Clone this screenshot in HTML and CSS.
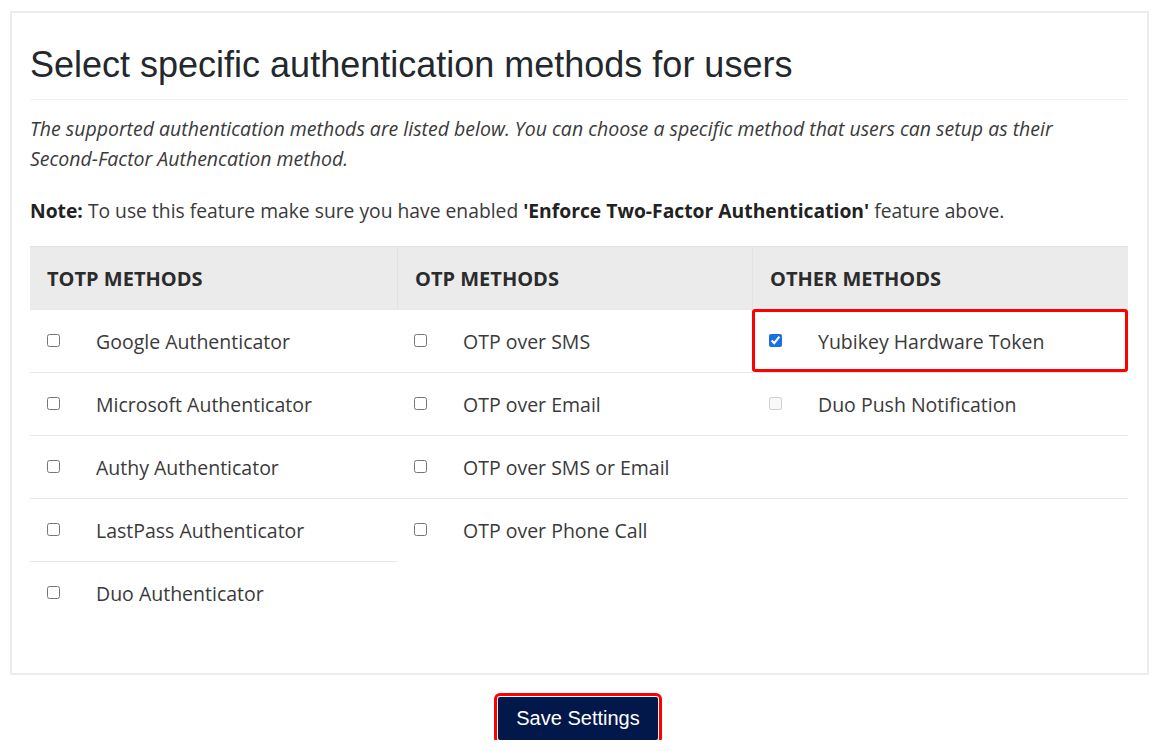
FILE: index.html
```html
<!DOCTYPE html>
<html lang="en">
<head>
    <meta charset="UTF-8">
    <title>Authentication methods</title>
    <link rel="stylesheet" href="styles.css">
</head>
<body>
<div class="page">
    <div class="card">
        <h2 class="card-title">Select specific authentication methods for users</h2>
        <p class="intro">The supported authentication methods are listed below. You can choose a specific method that users can setup as their Second-Factor Authencation method.</p>
        <p class="note"><b>Note:</b> To use this feature make sure you have enabled <b>'Enforce Two-Factor Authentication'</b> feature above.</p>

        <div class="methods">
            <div class="head">TOTP METHODS</div>
            <div class="head">OTP METHODS</div>
            <div class="head">OTHER METHODS</div>

            <label class="cell"><input type="checkbox"><span>Google Authenticator</span></label>
            <label class="cell"><input type="checkbox"><span>OTP over SMS</span></label>
            <label class="cell marked"><input type="checkbox" checked><span>Yubikey Hardware Token</span></label>

            <label class="cell"><input type="checkbox"><span>Microsoft Authenticator</span></label>
            <label class="cell"><input type="checkbox"><span>OTP over Email</span></label>
            <label class="cell"><input type="checkbox" disabled><span>Duo Push Notification</span></label>

            <label class="cell"><input type="checkbox"><span>Authy Authenticator</span></label>
            <label class="cell"><input type="checkbox"><span>OTP over SMS or Email</span></label>
            <div class="cell"></div>

            <label class="cell"><input type="checkbox"><span>LastPass Authenticator</span></label>
            <label class="cell"><input type="checkbox"><span>OTP over Phone Call</span></label>
            <div class="cell"></div>

            <label class="cell"><input type="checkbox"><span>Duo Authenticator</span></label>
        </div>
    </div>

    <div class="actions">
        <button type="button" class="save-button">Save Settings</button>
    </div>
</div>
</body>
</html>
```

FILE: styles.css
```css
body {
    margin: 0;
    background-color: #fff;
    font-family: "Open Sans", "Noto Sans", sans-serif;
    color: #3a3a3a;
}
.page {
    padding: 11px 7px 0 10px;
}
.card {
    border: 2px solid #ececec;
    padding: 18px 19px 49px 18px;
}
.card-title {
    margin: 0;
    padding: 16px 0 16px 0;
    font-family: "Liberation Sans", Arial, sans-serif;
    font-weight: normal;
    font-size: 36px;
    line-height: 36px;
    color: #23282d;
    border-bottom: 1px solid #f2f2f2;
}
.intro {
    margin: 14px 0 0 0;
    max-width: 1070px;
    font-size: 19.5px;
    line-height: 30px;
    font-style: italic;
}
.note {
    margin: 22px 0 0 0;
    font-size: 19.3px;
    line-height: 30px;
}
.note b {
    color: #222;
}
.methods {
    margin-top: 20px;
    display: grid;
    grid-template-columns: 367px 355px 1fr;
    grid-auto-rows: 63px;
    font-size: 19.5px;
}
.head {
    display: flex;
    align-items: center;
    padding-left: 17px;
    background-color: #ebebeb;
    border-top: 1px solid #e2e2e2;
    border-left: 1px solid #e2e2e2;
    font-weight: bold;
    font-size: 20px;
    color: #2b2b2b;
    height: 62px;
}
.head:first-child {
    border-left: none;
}
.cell {
    display: flex;
    align-items: center;
    padding-left: 17px;
    border-top: 1px solid #e6e8ec;
}
.cell input {
    margin: 0 36px 0 0;
    width: 13px;
    height: 13px;
    accent-color: #1a6fe6;
    position: relative;
    top: -1px;
}
.marked {
    outline: 3px solid #ff0000;
    outline-offset: -3px;
    border-radius: 3px;
}
.actions {
    display: flex;
    justify-content: center;
    padding: 22px 3px 0 0;
}
.save-button {
    font-family: "Liberation Sans", Arial, sans-serif;
    font-size: 20px;
    color: #fff;
    background-color: #03184a;
    border: none;
    border-radius: 2px;
    padding: 0 18px;
    height: 43px;
    outline: 3px solid #ff0000;
    outline-offset: 1px;
}
```
